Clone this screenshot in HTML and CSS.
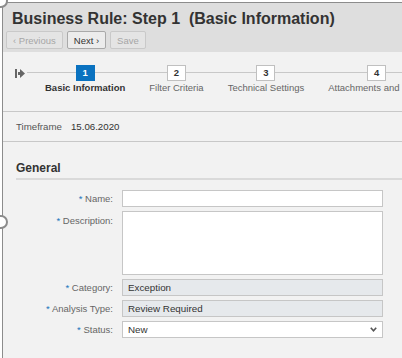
FILE: index.html
```html
<!DOCTYPE html>
<html lang="en">
<head>
    <meta charset="UTF-8">
    <meta name="viewport" content="width=device-width, initial-scale=1.0">
    <title>Business Rule: Step 1</title>
    <link rel="stylesheet" href="styles.css">
</head>
<body>
    <!-- Selection handles -->
    <div class="handle handle-top"></div>
    <div class="handle handle-left"></div>

    <div class="frame">
        <!-- Header -->
        <div class="header">
            <h1 class="title">Business Rule: Step 1&nbsp; (Basic Information)</h1>
            <div class="toolbar">
                <button class="btn" disabled>&lsaquo; Previous</button>
                <button class="btn btn-active">Next &rsaquo;</button>
                <button class="btn" disabled>Save</button>
            </div>
        </div>

        <!-- Wizard steps -->
        <div class="wizard">
            <svg class="wizard-icon" width="10" height="9" viewBox="0 0 10 9">
                <rect x="0" y="0" width="2" height="9" fill="#666"/>
                <rect x="3" y="3" width="3" height="3" fill="#666"/>
                <polygon points="5,0 10,4.5 5,9" fill="#666"/>
            </svg>
            <div class="steps">
                <div class="step step-active">
                    <div class="step-num">1</div>
                    <div class="step-label">Basic Information</div>
                </div>
                <div class="step">
                    <div class="step-num">2</div>
                    <div class="step-label">Filter Criteria</div>
                </div>
                <div class="step">
                    <div class="step-num">3</div>
                    <div class="step-label">Technical Settings</div>
                </div>
                <div class="step step-last">
                    <div class="step-num">4</div>
                    <div class="step-label">Attachments and</div>
                </div>
            </div>
        </div>

        <!-- Timeframe -->
        <div class="timeframe">
            <span class="timeframe-label">Timeframe</span>
            <span class="timeframe-value">15.06.2020</span>
        </div>

        <!-- Form -->
        <div class="section">
            <h2 class="section-title">General</h2>
            <div class="form">
                <label class="form-label"><span class="req">*</span> Name:</label>
                <div class="field"></div>

                <label class="form-label form-label-top"><span class="req">*</span> Description:</label>
                <div class="field field-area"></div>

                <label class="form-label"><span class="req">*</span> Category:</label>
                <div class="field field-readonly">Exception</div>

                <label class="form-label"><span class="req">*</span> Analysis Type:</label>
                <div class="field field-readonly">Review Required</div>

                <label class="form-label"><span class="req">*</span> Status:</label>
                <div class="field field-select">
                    <span>New</span>
                    <svg width="7" height="5" viewBox="0 0 7 5">
                        <polyline points="0.8,0.8 3.5,3.8 6.2,0.8" fill="none" stroke="#555" stroke-width="1.6"/>
                    </svg>
                </div>
            </div>
        </div>
    </div>
</body>
</html>
```

FILE: styles.css
```css
* {
    margin: 0;
    padding: 0;
    box-sizing: border-box;
}

body {
    background-color: #fff;
    font-family: 'Liberation Sans', Arial, sans-serif;
    height: 358px;
    overflow: hidden;
    position: relative;
}

/* Selection handles */
.handle {
    position: absolute;
    width: 14px;
    height: 14px;
    border: 2px solid #8c8c8c;
    border-radius: 50%;
    background-color: #fff;
    z-index: 20;
}

.handle-top { top: -6px; left: -6px; }
.handle-left { top: 215px; left: -6px; }

.frame {
    margin: 2px 0 0 2px;
    border-left: 1px solid #8c8c8c;
    border-top: 1px solid #8c8c8c;
    background-color: #f2f2f2;
    height: 356px;
    overflow: hidden;
}

/* Header */
.header {
    background-color: #dedede;
    padding: 6px 0 3px 3px;
}

.title {
    font-size: 16px;
    line-height: 19px;
    font-weight: bold;
    color: #333;
    margin-left: 6px;
}

.toolbar {
    display: flex;
    gap: 4px;
    margin-top: 3px;
}

.btn {
    height: 18px;
    padding: 0 6px;
    font-family: inherit;
    font-size: 9.5px;
    color: #a6a6a6;
    background-color: #e4e4e4;
    border: 1px solid #c9c9c9;
    border-radius: 2px;
}

.btn-active {
    color: #333;
    background-color: #ececec;
    border-color: #a9a9a9;
}

/* Wizard */
.wizard {
    position: relative;
    height: 59px;
    display: flex;
    align-items: flex-start;
    gap: 20px;
    padding: 13px 0 0 12px;
}

.wizard::before {
    content: "";
    position: absolute;
    top: 20px;
    left: 24px;
    right: 0;
    height: 1px;
    background-color: #c8c8c8;
}

.wizard-icon {
    margin-top: 4px;
    flex-shrink: 0;
}

.steps {
    display: flex;
    gap: 24px;
    position: relative;
}

.step {
    display: flex;
    flex-direction: column;
    align-items: center;
    flex-shrink: 0;
}

.step-last {
    width: 97px;
}

.step-last .step-label {
    align-self: flex-start;
}

.step-num {
    width: 19px;
    height: 16px;
    border: 1px solid #c0c0c0;
    background-color: #fff;
    font-size: 9.5px;
    font-weight: bold;
    line-height: 14px;
    text-align: center;
    color: #333;
}

.step-label {
    margin-top: 1px;
    font-size: 9.5px;
    line-height: 11px;
    color: #666;
    white-space: nowrap;
}

.step-active .step-num {
    background-color: #0a72c0;
    border-color: #0a72c0;
    color: #fff;
}

.step-active .step-label {
    font-weight: bold;
    color: #333;
}

/* Timeframe */
.timeframe {
    height: 31px;
    border-top: 1px solid #c8c8c8;
    border-bottom: 1px solid #c8c8c8;
    display: flex;
    align-items: center;
    gap: 9px;
    padding-left: 13px;
    font-size: 9.7px;
    color: #333;
}

.timeframe-label {
    color: #555;
}

/* Form */
.section {
    padding: 19px 0 0 13px;
}

.section-title {
    font-size: 12px;
    line-height: 14px;
    font-weight: bold;
    color: #333;
    padding-bottom: 3px;
    border-bottom: 2px solid #dadada;
}

.form {
    display: grid;
    grid-template-columns: 97px 1fr;
    column-gap: 9px;
    row-gap: 4px;
    margin: 10px 19px 0 0;
}

.form-label {
    font-size: 9.5px;
    color: #666;
    text-align: right;
    align-self: center;
    white-space: nowrap;
}

.form-label-top {
    align-self: start;
    padding-top: 4px;
}

.req {
    color: #1b75bb;
}

.field {
    height: 17px;
    background-color: #fff;
    border: 1px solid #c6c6c6;
    padding: 0 5px;
    font-size: 9.8px;
    line-height: 15px;
    color: #333;
}

.field-area {
    height: 64px;
}

.field-readonly {
    background-color: #e6e9ec;
}

.field-select {
    display: flex;
    align-items: center;
    justify-content: space-between;
}
```
